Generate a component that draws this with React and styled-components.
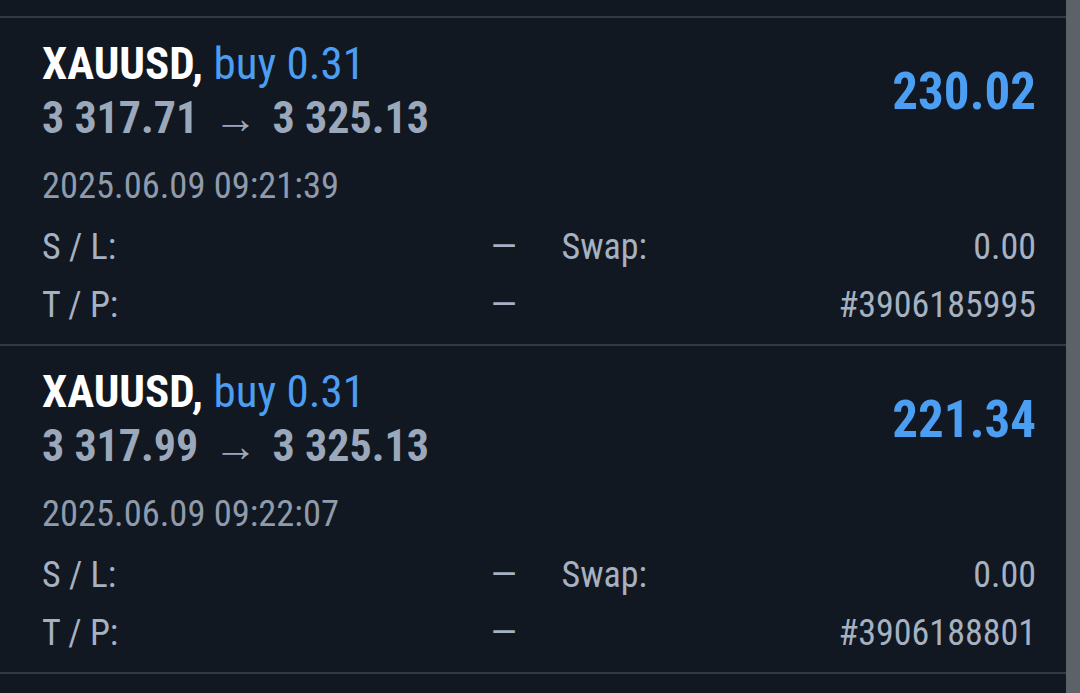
import React from 'react';
import styled, { createGlobalStyle } from 'styled-components';

const Global = createGlobalStyle`
  html, body { margin: 0; padding: 0; background: #111821; }
  body { font-family: "Roboto Condensed", "Roboto", sans-serif; }
`;

const Screen = styled.div`
  display: flex;
  height: 693px;
  overflow: hidden;
  background: #111821;
`;

const List = styled.div`
  flex: 1;
  padding-top: 16px;
`;

const Scrollbar = styled.div`
  width: 14px;
  background: #5d6269;
`;

const Divider = styled.div`
  height: 2px;
  background: #323946;
`;

const Card = styled.div`
  padding: 19px 30px 10px 42px;
`;

const Header = styled.div`
  display: flex;
  justify-content: space-between;
  align-items: center;
`;

const Title = styled.div`
  font-size: 45px;
  line-height: 54px;
  font-weight: 700;
  color: #ffffff;
  white-space: nowrap;
`;

const Side = styled.span`
  font-weight: 400;
  color: #4c9ef2;
`;

const Prices = styled.div`
  margin-top: 1px;
  font-size: 44px;
  line-height: 52px;
  font-weight: 700;
  color: #9ba8bb;
  white-space: nowrap;
`;

const Arrow = styled.span`
  font-weight: 400;
  margin: 0 5px;
`;

const Profit = styled.div`
  font-size: 51px;
  font-weight: 700;
  color: #4c9ef2;
  margin-top: 2px;
`;

const Time = styled.div`
  margin-top: 20px;
  font-size: 36.5px;
  line-height: 44px;
  color: #8f9bad;
`;

const Details = styled.div`
  margin-top: 10px;
  display: grid;
  grid-template-columns: 1fr 1fr;
  column-gap: 45px;
`;

const Field = styled.div`
  display: flex;
  justify-content: space-between;
  font-size: 36px;
  line-height: 58px;
  color: #a6b1c2;
  white-space: nowrap;
`;

const Dash = styled.span`
  display: inline-block;
  transform: scaleX(1.45);
  transform-origin: center;
  margin-right: 2px;
`;

const trades = [
  { open: '3 317.71', close: '3 325.13', profit: '230.02', time: '2025.06.09 09:21:39', ticket: '#3906185995' },
  { open: '3 317.99', close: '3 325.13', profit: '221.34', time: '2025.06.09 09:22:07', ticket: '#3906188801' },
];

export default function App() {
  return (
    <Screen>
      <Global />
      <List>
        {trades.map(t => (
          <React.Fragment key={t.ticket}>
            <Divider />
            <Card>
              <Header>
                <div>
                  <Title>XAUUSD, <Side>buy 0.31</Side></Title>
                  <Prices>{t.open}<Arrow> → </Arrow>{t.close}</Prices>
                </div>
                <Profit>{t.profit}</Profit>
              </Header>
              <Time>{t.time}</Time>
              <Details>
                <Field><span>S / L:</span><Dash>–</Dash></Field>
                <Field><span>Swap:</span><span>0.00</span></Field>
                <Field><span>T / P:</span><Dash>–</Dash></Field>
                <Field><span></span><span>{t.ticket}</span></Field>
              </Details>
            </Card>
          </React.Fragment>
        ))}
        <Divider />
      </List>
      <Scrollbar />
    </Screen>
  );
}
